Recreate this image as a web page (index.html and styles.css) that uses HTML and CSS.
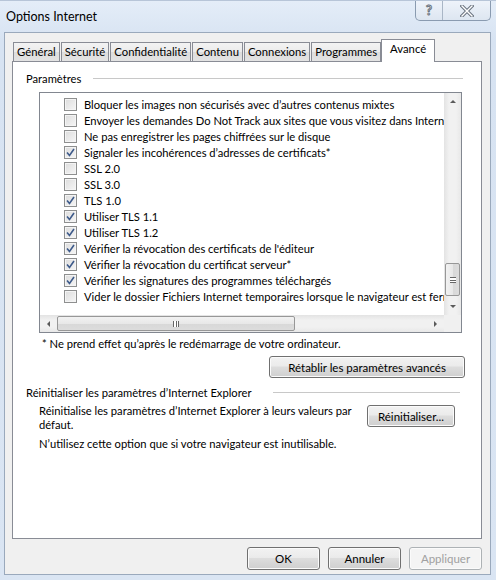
FILE: index.html
```html
<!DOCTYPE html>
<html lang="fr">
    <head>
        <meta charset="UTF-8">
        <title>Options Internet</title>
        <link rel="stylesheet" href="styles.css">
    </head>
    <body>
        <div class="fenetre">
            <header class="barre-titre">
                <span class="titre">Options Internet</span>
                <div class="boutons-titre">
                    <span class="btn-aide">?</span>
                    <span class="btn-fermer">
                        <svg width="14" height="12" viewBox="0 0 14 12">
                            <path d="M2 1 L12 11 M12 1 L2 11" stroke="#6b7480" stroke-width="3.4" stroke-linecap="square"/>
                            <path d="M2 1 L12 11 M12 1 L2 11" stroke="#fff" stroke-width="1.4" stroke-linecap="square"/>
                        </svg>
                    </span>
                </div>
            </header>

            <main class="client">
                <nav class="onglets">
                    <span class="onglet">Général</span>
                    <span class="onglet">Sécurité</span>
                    <span class="onglet">Confidentialité</span>
                    <span class="onglet">Contenu</span>
                    <span class="onglet">Connexions</span>
                    <span class="onglet">Programmes</span>
                    <span class="onglet actif">Avancé</span>
                </nav>

                <section class="panneau">
                    <div class="groupe-titre">
                        <span>Paramètres</span>
                        <i class="trait"></i>
                    </div>

                    <div class="liste">
                        <div class="liste-haut">
                            <div class="liste-contenu" id="liste"></div>
                            <div class="scroll-v">
                                <span class="fleche"><b class="tri tri-haut"></b></span>
                                <span class="piste"></span>
                                <span class="pouce-v"><b class="grip-v"></b></span>
                                <span class="fleche"><b class="tri tri-bas"></b></span>
                            </div>
                        </div>
                        <div class="scroll-h">
                            <span class="fleche-h"><b class="tri tri-gauche"></b></span>
                            <span class="pouce-h"><b class="grip-h"></b></span>
                            <span class="piste-h"></span>
                            <span class="fleche-h"><b class="tri tri-droite"></b></span>
                            <span class="coin"></span>
                        </div>
                    </div>

                    <p class="note">* Ne prend effet qu’après le redémarrage de votre ordinateur.</p>

                    <div class="ligne-bouton">
                        <button class="bouton large">Rétablir les paramètres avancés</button>
                    </div>

                    <div class="groupe-titre groupe-reset">
                        <span>Réinitialiser les paramètres d’Internet Explorer</span>
                        <i class="trait"></i>
                    </div>

                    <div class="reset">
                        <p>Réinitialise les paramètres d’Internet Explorer à leurs valeurs par défaut.</p>
                        <button class="bouton">Réinitialiser...</button>
                    </div>
                    <p class="avertissement">N’utilisez cette option que si votre navigateur est inutilisable.</p>
                </section>

                <footer class="actions">
                    <button class="bouton action">OK</button>
                    <button class="bouton action">Annuler</button>
                    <button class="bouton action" disabled>Appliquer</button>
                </footer>
            </main>
        </div>

        <script>
            let liste = document.getElementById("liste");

            // options : [texte, coché]
            let Options = [
                ["Bloquer les images non sécurisés avec d’autres contenus mixtes", false],
                ["Envoyer les demandes Do Not Track aux sites que vous visitez dans Internet Explorer", false],
                ["Ne pas enregistrer les pages chiffrées sur le disque", false],
                ["Signaler les incohérences d’adresses de certificats*", true],
                ["SSL 2.0", false],
                ["SSL 3.0", false],
                ["TLS 1.0", true],
                ["Utiliser TLS 1.1", true],
                ["Utiliser TLS 1.2", true],
                ["Vérifier la révocation des certificats de l'éditeur", true],
                ["Vérifier la révocation du certificat serveur*", true],
                ["Vérifier les signatures des programmes téléchargés", true],
                ["Vider le dossier Fichiers Internet temporaires lorsque le navigateur est fermé", false]
            ];

            let coche = '<svg width="9" height="9" viewBox="0 0 9 9"><path d="M1 4.5 L3.5 7.5 L8 1" fill="none" stroke="#3d5a8a" stroke-width="1.6"/></svg>';

            for (let option of Options) {
                let ligne = document.createElement("div");
                ligne.className = "option";
                ligne.innerHTML = `<span class="case">${option[1] ? coche : ""}</span><span>${option[0]}</span>`;
                liste.appendChild(ligne);
            }
        </script>
    </body>
</html>
```

FILE: styles.css
```css
* {
    padding: 0;
    margin: 0;
    box-sizing: border-box;
}

body {
    width: 496px;
    height: 580px;
    overflow: hidden;
    font-family: Lato, "Liberation Sans", sans-serif;
    font-size: 11.2px;
    color: #000;
    background-color: #dbe6f3;
}

.fenetre {
    width: 496px;
    height: 580px;
    display: flex;
    flex-direction: column;
    background: linear-gradient(#e4edf8, #d7e3f2 40px, #dae5f3);
    border-top: 1px solid #b7c5d8;
}

.barre-titre {
    height: 31px;
    display: flex;
    justify-content: space-between;
    align-items: flex-start;
    padding-left: 6px;
    padding-right: 5px;
}

.titre {
    font-size: 12.5px;
    margin-top: 8px;
}

.boutons-titre {
    display: flex;
    height: 20px;
    border: 1px solid #8a9bb0;
    border-top: none;
    border-radius: 0 0 5px 5px;
    background: linear-gradient(#eef3fa, #dde6f1);
    overflow: hidden;
}

.btn-aide {
    width: 27px;
    text-align: center;
    border-right: 1px solid #a9b6c6;
    font-weight: bold;
    font-size: 13px;
    line-height: 18px;
    color: #fff;
    -webkit-text-stroke: 1px #6b7480;
}

.btn-fermer {
    width: 47px;
    display: flex;
    justify-content: center;
    align-items: center;
}

.client {
    flex: 1;
    margin: 0 5px 5px 4px;
    border: 1px solid #9aa9bc;
    background-color: #f0f0f0;
    padding: 7px 8px 0 7px;
    display: flex;
    flex-direction: column;
}

.onglets {
    display: flex;
    align-items: flex-end;
    height: 21px;
    padding-left: 1px;
    position: relative;
    z-index: 1;
}

.onglet {
    height: 19px;
    padding: 0 3px;
    margin-right: 1px;
    border: 1px solid #898c95;
    border-bottom: none;
    background: linear-gradient(#f3f3f3, #ebebeb 50%, #dddddd 51%, #e3e3e3);
    line-height: 17px;
    font-size: 11.3px;
    white-space: nowrap;
}

.onglet.actif {
    height: 23px;
    padding: 0 8px;
    margin-left: -1px;
    margin-bottom: -1px;
    background: #fff;
    line-height: 17px;
}

.panneau {
    height: 478px;
    border: 1px solid #898c95;
    background-color: #fff;
    padding: 8px 18px 0 13px;
    display: flex;
    flex-direction: column;
}

.groupe-titre {
    display: flex;
    align-items: center;
    height: 16px;
}

.groupe-titre .trait {
    flex: 1;
    height: 1px;
    margin-left: 12px;
    margin-top: 1px;
    background-color: #c8c8c8;
}

.liste {
    margin: 6px 1px 0 13px;
    border: 1px solid #828790;
    height: 241px;
    display: flex;
    flex-direction: column;
}

.liste-haut {
    flex: 1;
    display: flex;
    overflow: hidden;
}

.liste-contenu {
    flex: 1;
    overflow: hidden;
    padding-top: 3px;
}

.option {
    display: flex;
    align-items: center;
    height: 16px;
    padding-left: 24px;
    white-space: nowrap;
}

.case {
    flex: none;
    width: 13px;
    height: 13px;
    margin-right: 7px;
    border: 1px solid #8e8f8f;
    background: linear-gradient(135deg, #dcdcdc, #f6f6f6);
    box-shadow: inset 0 0 0 1px #f4f4f4;
    display: flex;
    justify-content: center;
    align-items: center;
}

.scroll-v {
    width: 17px;
    display: flex;
    flex-direction: column;
    background: linear-gradient(90deg, #e3e3e3, #f1f1f1 30%, #f1f1f1 70%, #e8e8e8);
}

.fleche, .fleche-h {
    flex: none;
    width: 17px;
    height: 17px;
    display: flex;
    justify-content: center;
    align-items: center;
}

.piste {
    flex: 1;
}

.pouce-v {
    height: 33px;
    margin: 0 0 2px 1px;
    width: 15px;
    border: 1px solid #979797;
    border-radius: 2px;
    background: linear-gradient(90deg, #f2f2f2, #e8e8e8 50%, #d8d8d8 51%, #dcdcdc);
    display: flex;
    justify-content: center;
    align-items: center;
}

.grip-v {
    width: 6px;
    height: 6px;
    border-top: 1px solid #666;
    border-bottom: 1px solid #666;
    background: linear-gradient(#fff 2px, #666 2px, #666 3px, #fff 3px);
}

.tri {
    width: 0;
    height: 0;
    border: 3px solid transparent;
}

.tri-haut {
    border-bottom: 3px solid #5a5a5a;
    margin-top: -3px;
}

.tri-bas {
    border-top: 3px solid #5a5a5a;
    margin-bottom: -3px;
}

.tri-gauche {
    border-right: 3px solid #5a5a5a;
    margin-left: -3px;
}

.tri-droite {
    border-left: 3px solid #5a5a5a;
    margin-right: -3px;
}

.scroll-h {
    height: 17px;
    display: flex;
    background: linear-gradient(#e3e3e3, #f1f1f1 30%, #f1f1f1 70%, #e8e8e8);
}

.pouce-h {
    width: 238px;
    height: 15px;
    margin-top: 1px;
    border: 1px solid #979797;
    border-radius: 2px;
    background: linear-gradient(#f2f2f2, #e8e8e8 50%, #d8d8d8 51%, #dcdcdc);
    display: flex;
    justify-content: center;
    align-items: center;
}

.grip-h {
    width: 6px;
    height: 6px;
    border-left: 1px solid #666;
    border-right: 1px solid #666;
    background: linear-gradient(90deg, #fff 2px, #666 2px, #666 3px, #fff 3px);
}

.piste-h {
    flex: 1;
}

.coin {
    width: 17px;
    background-color: #f0f0f0;
}

.note {
    margin: 4px 0 0 16px;
    line-height: 14px;
}

.ligne-bouton {
    display: flex;
    justify-content: flex-end;
    margin-top: 5px;
    margin-right: -2px;
}

.bouton {
    font-family: inherit;
    font-size: 11.5px;
    color: #000;
    height: 22px;
    border: 1px solid #707070;
    border-radius: 3px;
    background: linear-gradient(#f2f2f2, #ebebeb 45%, #dddddd 50%, #cfcfcf);
    box-shadow: inset 0 0 0 1px #fbfbfb;
}

.bouton.large {
    width: 196px;
}

.bouton:disabled {
    color: #a0a0a0;
    border-color: #adb2b5;
    background: #f4f4f4;
}

.groupe-reset {
    margin-top: 6px;
}

.groupe-reset .trait {
    margin-left: 22px;
    margin-right: 3px;
}

.reset {
    display: flex;
    justify-content: space-between;
    align-items: flex-start;
    margin: 3px 8px 0 13px;
}

.reset p {
    width: 322px;
    line-height: 14px;
    margin-top: 1px;
}

.reset .bouton {
    width: 88px;
    margin-top: 2px;
}

.avertissement {
    margin: 5px 0 0 13px;
    line-height: 14px;
}

.actions {
    display: flex;
    justify-content: flex-end;
    gap: 8px;
    padding-top: 8px;
    padding-right: 0;
}

.bouton.action {
    width: 73px;
    height: 23px;
}
```
